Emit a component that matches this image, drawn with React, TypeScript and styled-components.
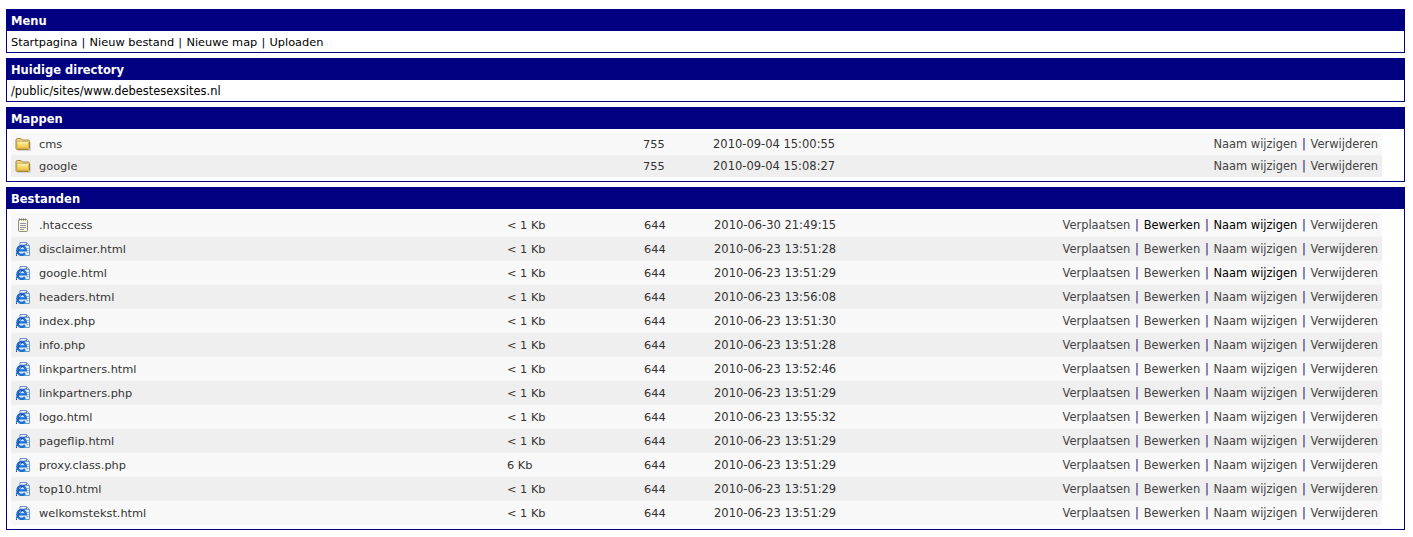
import React from "react";
import styled, { createGlobalStyle } from "styled-components";

const Global = createGlobalStyle`
  html, body { margin: 0; padding: 0; background: #fff; }
  body { font-family: "DejaVu Sans", Verdana, sans-serif; font-size: 11.35px; color: #000; }
`;

const Page = styled.div`
  display: flex;
  flex-direction: column;
  gap: 5px;
  padding: 9px 8px 0 6px;
  box-sizing: border-box;
  width: 1413px;
`;

const Panel = styled.section`
  border: 1px solid #000080;
  border-top: 0;
  background: #fff;
`;

const PanelTitle = styled.h2`
  margin: 0 -1px;
  height: 22px;
  padding-left: 5px;
  background: #000080;
  color: #fff;
  font-size: 11.5px;
  font-weight: bold;
  line-height: 24px;
`;

const PanelText = styled.div`
  height: 21px;
  padding-left: 4px;
  line-height: 22px;
  white-space: pre;
`;

const DirectoryText = styled(PanelText)`
  font-size: 11.45px;
`;

const Rows = styled.div`
  display: flex;
  flex-direction: column;
  width: 1371px;
  margin: 4px 0 4px 4px;
`;

const Row = styled.div<{ $height: number; $columns: string; $even: boolean }>`
  display: grid;
  grid-template-columns: ${(p) => p.$columns};
  grid-template-rows: ${(p) => p.$height}px;
  align-items: center;
  height: ${(p) => p.$height}px;
  line-height: ${(p) => p.$height}px;
  background: ${(p) => (p.$even ? "#efefef" : "#f8f8f8")};
  color: #333;
  white-space: pre;
`;

const IconCell = styled.span`
  display: flex;
  padding-left: 4px;
`;

const DateCell = styled.span`
  font-size: 11.5px;
`;

const Actions = styled.span`
  justify-self: end;
  padding-right: 4px;
  font-size: 11.45px;
`;

const Action = styled.span<{ $visited?: boolean }>`
  color: ${(p) => (p.$visited ? "#000" : "#444")};
`;

const Sep = styled.span<{ $plain?: boolean }>`
  margin: 0 ${(p) => (p.$plain ? 0.6 : 1.1)}px;
  color: ${(p) => (p.$plain ? "#000040" : "#2c0a6c")};
`;

const FolderIcon = () => (
  <svg width="16" height="16" viewBox="0 0 16 16">
    <defs>
      <linearGradient id="folderBody" x1="0" y1="0" x2="0" y2="1">
        <stop offset="0" stopColor="#fff6c8" />
        <stop offset="0.35" stopColor="#fbe27c" />
        <stop offset="1" stopColor="#eebd3c" />
      </linearGradient>
    </defs>
    <path d="M3 14.5 H15.5 V6" fill="none" stroke="#d0d0d0" />
    <path d="M1 4 Q1 2.5 2.5 2.5 H6 L7.5 4 H13 Q14.5 4 14.5 5.5 V12.5 Q14.5 13.5 13.5 13.5 H2 Q1 13.5 1 12.5 Z" fill="#ecd08a" stroke="#a8873c" />
    <rect x="2" y="5.5" width="11.5" height="7" rx=".6" fill="url(#folderBody)" stroke="#c09a3c" strokeWidth=".6" />
  </svg>
);

const NoteIcon = () => (
  <svg width="16" height="16" viewBox="0 0 16 16">
    <rect x="3.5" y="2.5" width="9" height="12" rx="1" fill="#fbf8e8" stroke="#8f8f7c" />
    <path d="M4.5 1.5 V3.5 M6.5 1.5 V3.5 M8.5 1.5 V3.5 M10.5 1.5 V3.5" stroke="#707070" />
    <path d="M5 6.5 H11 M5 8.5 H11 M5 10.5 H11 M5 12.5 H9" stroke="#8a94a4" />
  </svg>
);

const IeIcon = () => (
  <svg width="16" height="16" viewBox="0 0 16 16">
    <path d="M5 1.5 H11.5 L14.5 4.5 V14.5 H5 Z" fill="#dfeafa" stroke="#6f94c8" />
    <path d="M11.5 1.5 V4.5 H14.5" fill="#bcd2f0" stroke="#6f94c8" />
    <path d="M11 7.5 H13.5 M11.5 9.5 H13.5 M11.5 11.5 H13.5" stroke="#8fb0dc" />
    <circle cx="6.8" cy="9.2" r="4.6" fill="#cfe6fa" />
    <path d="M2.6 9.4 H10.9 A4.3 4.5 0 1 0 10 12.2" fill="none" stroke="#1f6fd0" strokeWidth="2.3" />
    <path d="M1.5 15 Q0.5 12 6 6.5 Q9.5 3.4 11.5 3.8" fill="none" stroke="#14489c" strokeWidth="1" />
  </svg>
);

type Entry = { name: string; size?: string; perm: string; date: string; visited?: string[] };

const folders: Entry[] = [
  { name: "cms", perm: "755", date: "2010-09-04 15:00:55" },
  { name: "google", perm: "755", date: "2010-09-04 15:08:27" },
];

const files: Entry[] = [
  { name: ".htaccess", size: "< 1 Kb", perm: "644", date: "2010-06-30 21:49:15", visited: ["Bewerken", "Naam wijzigen"] },
  { name: "disclaimer.html", size: "< 1 Kb", perm: "644", date: "2010-06-23 13:51:28" },
  { name: "google.html", size: "< 1 Kb", perm: "644", date: "2010-06-23 13:51:29", visited: ["Naam wijzigen"] },
  { name: "headers.html", size: "< 1 Kb", perm: "644", date: "2010-06-23 13:56:08" },
  { name: "index.php", size: "< 1 Kb", perm: "644", date: "2010-06-23 13:51:30" },
  { name: "info.php", size: "< 1 Kb", perm: "644", date: "2010-06-23 13:51:28" },
  { name: "linkpartners.html", size: "< 1 Kb", perm: "644", date: "2010-06-23 13:52:46" },
  { name: "linkpartners.php", size: "< 1 Kb", perm: "644", date: "2010-06-23 13:51:29" },
  { name: "logo.html", size: "< 1 Kb", perm: "644", date: "2010-06-23 13:55:32" },
  { name: "pageflip.html", size: "< 1 Kb", perm: "644", date: "2010-06-23 13:51:29" },
  { name: "proxy.class.php", size: "6 Kb", perm: "644", date: "2010-06-23 13:51:29" },
  { name: "top10.html", size: "< 1 Kb", perm: "644", date: "2010-06-23 13:51:29" },
  { name: "welkomstekst.html", size: "< 1 Kb", perm: "644", date: "2010-06-23 13:51:29" },
];

const ActionList = ({ items, visited = [] }: { items: string[]; visited?: string[] }) => (
  <Actions>
    {items.map((item, i) => (
      <React.Fragment key={item}>
        {i > 0 && <Sep> | </Sep>}
        <Action $visited={visited.includes(item)}>{item}</Action>
      </React.Fragment>
    ))}
  </Actions>
);

const Menu = ["Startpagina", "Nieuw bestand", "Nieuwe map", "Uploaden"];

export default function App() {
  return (
    <Page>
      <Global />
      <Panel>
        <PanelTitle>Menu</PanelTitle>
        <PanelText>
          {Menu.map((m, i) => (
            <React.Fragment key={m}>
              {i > 0 && <Sep $plain> | </Sep>}
              {m}
            </React.Fragment>
          ))}
        </PanelText>
      </Panel>
      <Panel>
        <PanelTitle>Huidige directory</PanelTitle>
        <DirectoryText>/public/sites/www.debestesexsites.nl</DirectoryText>
      </Panel>
      <Panel>
        <PanelTitle>Mappen</PanelTitle>
        <Rows>
          {folders.map((f, i) => (
            <Row key={f.name} $height={22} $even={i % 2 === 1} $columns="28px 604px 70px auto 1fr">
              <IconCell><FolderIcon /></IconCell>
              <span>{f.name}</span>
              <span>{f.perm}</span>
              <DateCell>{f.date}</DateCell>
              <ActionList items={["Naam wijzigen", "Verwijderen"]} />
            </Row>
          ))}
        </Rows>
      </Panel>
      <Panel>
        <PanelTitle>Bestanden</PanelTitle>
        <Rows>
          {files.map((f, i) => (
            <Row key={f.name} $height={24} $even={i % 2 === 1} $columns="28px 468px 137px 70px auto 1fr">
              <IconCell>{f.name === ".htaccess" ? <NoteIcon /> : <IeIcon />}</IconCell>
              <span>{f.name}</span>
              <span>{f.size}</span>
              <span>{f.perm}</span>
              <DateCell>{f.date}</DateCell>
              <ActionList items={["Verplaatsen", "Bewerken", "Naam wijzigen", "Verwijderen"]} visited={f.visited} />
            </Row>
          ))}
        </Rows>
      </Panel>
    </Page>
  );
}
